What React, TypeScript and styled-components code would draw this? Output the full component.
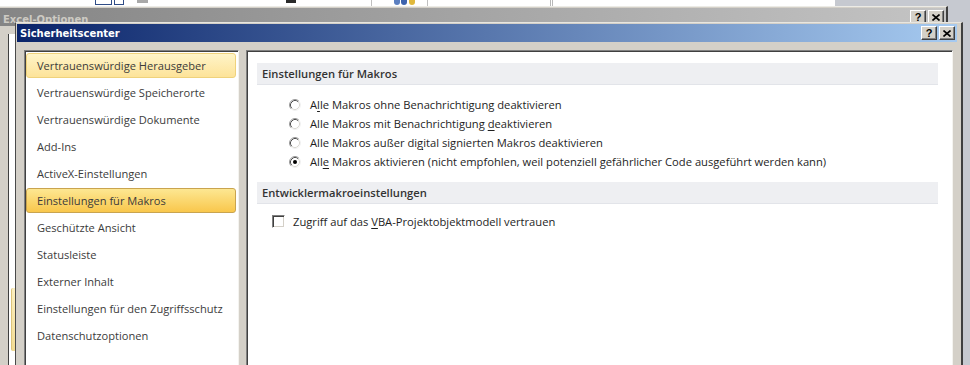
import React from "react";
import styled, { createGlobalStyle } from "styled-components";

const GlobalStyle = createGlobalStyle`
  html, body { margin: 0; padding: 0; }
  body {
    width: 970px;
    height: 365px;
    overflow: hidden;
    background: #c6c9d0;
    font-family: "Open Sans", "Noto Sans", sans-serif;
  }
`;

const Desktop = styled.div`
  position: relative;
  width: 970px;
  height: 365px;
  overflow: hidden;
  background: #c6c9d0;
`;

const SheetStrip = styled.div`
  width: 835px;
  height: 6px;
  background: #fff;
  display: flex;
  align-items: flex-start;
`;

const Bit = styled.div<{ $ml: number; $w: number; $h: number; $c: string }>`
  margin-left: ${(p) => p.$ml}px;
  width: ${(p) => p.$w}px;
  height: ${(p) => p.$h}px;
  background: ${(p) => p.$c};
  flex-shrink: 0;
`;

const BoxBit = styled.div<{ $ml: number; $w: number }>`
  margin-left: ${(p) => p.$ml}px;
  width: ${(p) => p.$w}px;
  height: 4px;
  border: 1px solid #2f4c86;
  border-top: none;
  flex-shrink: 0;
`;

const Dot = styled.div<{ $ml: number; $c: string }>`
  margin-left: ${(p) => p.$ml}px;
  width: 6px;
  height: 5px;
  border-radius: 0 0 3px 3px;
  background: ${(p) => p.$c};
  flex-shrink: 0;
`;

/* back window: Excel-Optionen */
const BackWindow = styled.div`
  position: absolute;
  left: 0;
  top: 6px;
  width: 948px;
  height: 359px;
  box-sizing: border-box;
  background: #d4d0c8;
  border-top: 1px solid #ecebe6;
  border-right: 2px solid #404040;
  padding-top: 1px;
  display: flex;
  flex-direction: column;
`;

const TitleBar = styled.div<{ $active?: boolean }>`
  height: 18px;
  flex-shrink: 0;
  display: flex;
  align-items: center;
  justify-content: space-between;
  padding: 0 2px 0 3px;
  background: ${(p) =>
    p.$active
      ? "linear-gradient(to right, #0a246a, #a6caf0)"
      : "linear-gradient(to right, #858585, #c4c4c4)"};
`;

const TitleText = styled.span<{ $active?: boolean }>`
  font-family: "DejaVu Sans", sans-serif;
  font-weight: bold;
  font-size: 10px;
  color: ${(p) => (p.$active ? "#fff" : "#cdcac3")};
  padding-top: ${(p) => (p.$active ? 0 : 4)}px;
`;

const CaptionButtons = styled.div`
  display: flex;
  gap: 2px;
`;

const CaptionButton = styled.div`
  width: 16px;
  height: 14px;
  box-sizing: border-box;
  background: #d4d0c8;
  border: 1px solid;
  border-color: #fff #404040 #404040 #fff;
  box-shadow: inset -1px -1px 0 #808080;
  display: flex;
  align-items: center;
  justify-content: center;
  font-family: "Liberation Sans", sans-serif;
  font-weight: bold;
  font-size: 11px;
  line-height: 1;
  color: #000;
`;

const BackBody = styled.div`
  flex: 1;
  display: flex;
  padding: 8px 0 0 8px;
`;

const BackPanel = styled.div`
  width: 10px;
  background: #fff;
  border-left: 1px solid #404040;
  padding-left: 2px;
`;

const BackHighlight = styled.div`
  margin-top: 254px;
  width: 3px;
  height: 63px;
  background: linear-gradient(to bottom, #fcefc0, #f3dc94);
  border-left: 1px solid #dcc37a;
  border-radius: 2px 0 0 2px;
`;

/* front dialog: Sicherheitscenter */
const Dialog = styled.div`
  position: absolute;
  left: 15px;
  top: 22px;
  width: 948px;
  height: 360px;
  box-sizing: border-box;
  background: #d4d0c8;
  border-left: 1px solid #4a4a4a;
  border-right: 2px solid #404040;
  border-top: 1px solid #e8e6e0;
  padding: 1px 4px 0 1px;
  display: flex;
  flex-direction: column;
`;

const DialogBody = styled.div`
  display: flex;
  gap: 7px;
  padding: 8px 0 0 7px;
`;

const Sunken = styled.div`
  box-sizing: border-box;
  height: 330px;
  background: #fff;
  border: 1px solid;
  border-color: #808080 #f4f3ef #f4f3ef #808080;
  box-shadow: inset 1px 1px 0 #404040;
`;

const NavPanel = styled(Sunken)`
  width: 215px;
  padding: 2px 2px 0 1px;
  display: flex;
  flex-direction: column;
  gap: 2px;
`;

const NavItem = styled.div<{ $state?: "hover" | "selected" }>`
  height: 25px;
  box-sizing: border-box;
  display: flex;
  align-items: center;
  padding-left: 10px;
  font-size: 11.1px;
  color: #3b3b3b;
  border: 1px solid transparent;
  border-radius: 3px;
  ${(p) =>
    p.$state === "hover" &&
    `
    background: linear-gradient(to bottom, #fef4c8, #fde399);
    border-color: #efd27c;
  `}
  ${(p) =>
    p.$state === "selected" &&
    `
    background: linear-gradient(to bottom, #fde792, #f9c74c);
    border-color: #c9a44f;
  `}
`;

const ContentPanel = styled(Sunken)`
  width: 707px;
  padding: 12px 14px 0 10px;
`;

const SectionHeader = styled.div<{ $mt?: number }>`
  height: 22px;
  box-sizing: border-box;
  margin-top: ${(p) => p.$mt ?? 0}px;
  display: flex;
  align-items: center;
  padding-left: 5px;
  background: #eeeff2;
  border-bottom: 1px solid #e2e4e9;
  font-size: 11.2px;
  font-weight: 600;
  color: #333;
`;

const OptionList = styled.div`
  margin-top: 10px;
  padding-left: 32px;
  display: flex;
  flex-direction: column;
`;

const OptionRow = styled.div`
  height: 19px;
  display: flex;
  align-items: center;
  gap: 9px;
  font-size: 11.2px;
  color: #1e1e1e;
`;

const CheckRow = styled(OptionRow)`
  margin-top: 8px;
  padding-left: 15px;
  gap: 8px;
`;

const Key = styled.span`
  text-decoration: underline;
  text-underline-offset: 2px;
`;

const CheckBox = styled.span`
  width: 13px;
  height: 13px;
  box-sizing: border-box;
  flex-shrink: 0;
  background: #fff;
  border: 1px solid;
  border-color: #808080 #fff #fff #808080;
  box-shadow: inset 1px 1px 0 #404040, inset -1px -1px 0 #d4d0c8;
`;

const Radio = ({ checked }: { checked?: boolean }) => (
  <svg width="12" height="12" viewBox="0 0 12 12" style={{ flexShrink: 0 }}>
    <circle cx="6" cy="6" r="5" fill="#fff" />
    <path d="M2.11 9.89 A5.5 5.5 0 0 1 9.89 2.11" fill="none" stroke="#9a9a9a" />
    <path d="M9.89 2.11 A5.5 5.5 0 0 1 2.11 9.89" fill="none" stroke="#f2f2f2" />
    <path d="M2.82 9.18 A4.5 4.5 0 0 1 9.18 2.82" fill="none" stroke="#505050" />
    <path d="M9.18 2.82 A4.5 4.5 0 0 1 2.82 9.18" fill="none" stroke="#dcdad4" />
    {checked && <circle cx="6" cy="6" r="2" fill="#000" />}
  </svg>
);

const CloseGlyph = () => (
  <svg width="8" height="7" viewBox="0 0 8 7">
    <path d="M0.5 0.5 L7.5 6.5 M7.5 0.5 L0.5 6.5" stroke="#000" strokeWidth="1.6" />
  </svg>
);

const navItems = [
  "Vertrauenswürdige Herausgeber",
  "Vertrauenswürdige Speicherorte",
  "Vertrauenswürdige Dokumente",
  "Add-Ins",
  "ActiveX-Einstellungen",
  "Einstellungen für Makros",
  "Geschützte Ansicht",
  "Statusleiste",
  "Externer Inhalt",
  "Einstellungen für den Zugriffsschutz",
  "Datenschutzoptionen",
];

export default function App() {
  return (
    <Desktop>
      <GlobalStyle />
      <SheetStrip>
        <BoxBit $ml={95} $w={15} />
        <BoxBit $ml={2} $w={8} />
        <Bit $ml={13} $w={11} $h={3} $c="#a9a9a9" />
        <Bit $ml={138} $w={10} $h={3} $c="#2a2a2a" />
        <Bit $ml={75} $w={1} $h={6} $c="#c0c0c0" />
        <Dot $ml={22} $c="#5b7fc0" />
        <Dot $ml={1} $c="#3d63ad" />
        <Dot $ml={2} $c="#e0b83c" />
        <Bit $ml={12} $w={1} $h={6} $c="#c0c0c0" />
        <Bit $ml={122} $w={1} $h={6} $c="#b8b8b8" />
        <Bit $ml={1} $w={1} $h={6} $c="#b8b8b8" />
      </SheetStrip>

      <BackWindow>
        <TitleBar>
          <TitleText>Excel-Optionen</TitleText>
          <CaptionButtons>
            <CaptionButton>?</CaptionButton>
            <CaptionButton>
              <CloseGlyph />
            </CaptionButton>
          </CaptionButtons>
        </TitleBar>
        <BackBody>
          <BackPanel>
            <BackHighlight />
          </BackPanel>
        </BackBody>
      </BackWindow>

      <Dialog>
        <TitleBar $active>
          <TitleText $active>Sicherheitscenter</TitleText>
          <CaptionButtons>
            <CaptionButton>?</CaptionButton>
            <CaptionButton>
              <CloseGlyph />
            </CaptionButton>
          </CaptionButtons>
        </TitleBar>
        <DialogBody>
          <NavPanel>
            {navItems.map((item, i) => (
              <NavItem key={item} $state={i === 0 ? "hover" : i === 5 ? "selected" : undefined}>
                {item}
              </NavItem>
            ))}
          </NavPanel>
          <ContentPanel>
            <SectionHeader>Einstellungen für Makros</SectionHeader>
            <OptionList>
              <OptionRow>
                <Radio />
                <span>
                  A<Key>l</Key>le Makros ohne Benachrichtigung deaktivieren
                </span>
              </OptionRow>
              <OptionRow>
                <Radio />
                <span>
                  Alle Makros mit Benachrichtigung <Key>d</Key>eaktivieren
                </span>
              </OptionRow>
              <OptionRow>
                <Radio />
                <span>
                  Alle Makros außer di<Key>g</Key>ital signierten Makros deaktivieren
                </span>
              </OptionRow>
              <OptionRow>
                <Radio checked />
                <span>
                  All<Key>e</Key> Makros aktivieren (nicht empfohlen, weil potenziell gefährlicher Code
                  ausgeführt werden kann)
                </span>
              </OptionRow>
            </OptionList>
            <SectionHeader $mt={11}>Entwicklermakroeinstellungen</SectionHeader>
            <CheckRow>
              <CheckBox />
              <span>
                Zugriff auf das <Key>V</Key>BA-Projektobjektmodell vertrauen
              </span>
            </CheckRow>
          </ContentPanel>
        </DialogBody>
      </Dialog>
    </Desktop>
  );
}
